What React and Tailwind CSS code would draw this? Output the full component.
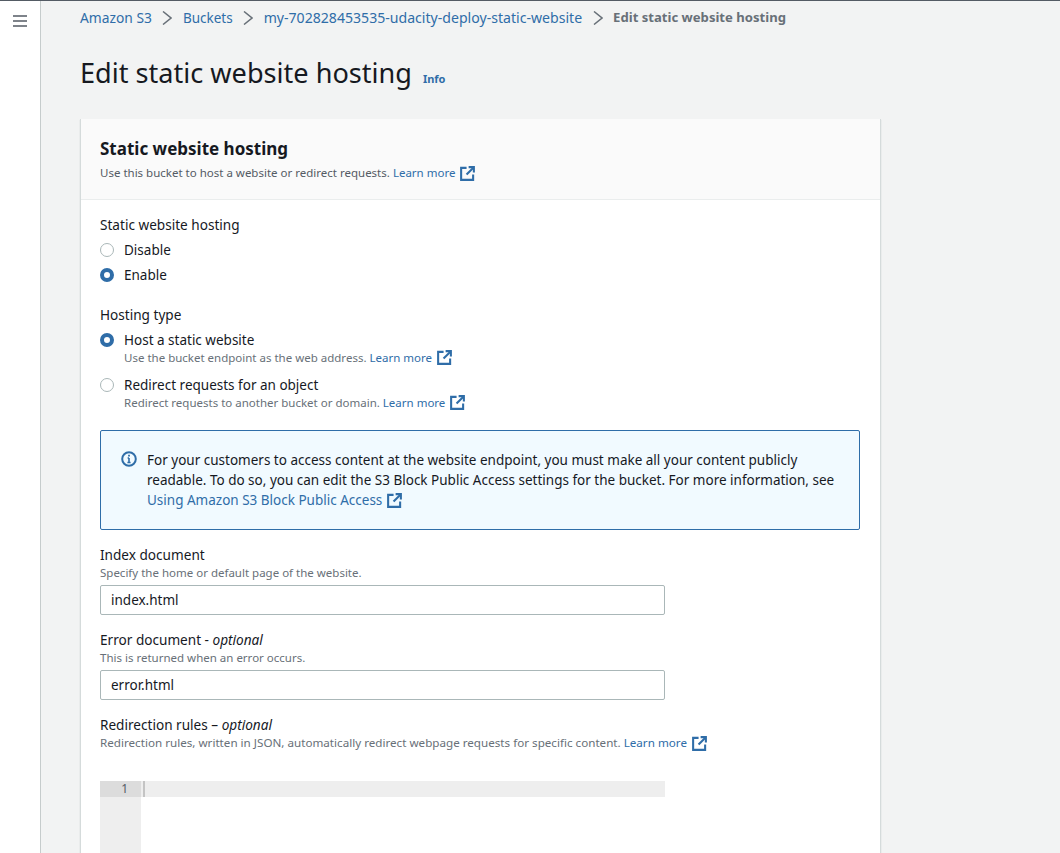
const FONT = "font-['Noto_Sans',sans-serif]";

function ExternalIcon({ className = "" }) {
  return (
    <svg viewBox="0 0 16 16" className={`inline-block w-[15px] h-[15px] shrink-0 ${className}`} fill="none" stroke="#2f6da8" strokeWidth="2.2">
      <path d="M7 2H1.2v12.8H14V9" />
      <path d="M9.2 1.2h5.6v5.6" />
      <path d="M14.5 1.5L7 9" />
    </svg>
  );
}

function LearnMore({ text = "Learn more" }) {
  return (
    <a className="text-[#2f6da8] inline-flex items-center gap-[5px] ml-[3px]">
      {text}
      <ExternalIcon />
    </a>
  );
}

function Radio({ checked }) {
  return checked ? (
    <span className="w-[14px] h-[14px] rounded-full bg-white border-[4px] border-[#2f6da8] shrink-0" />
  ) : (
    <span className="w-[14px] h-[14px] rounded-full bg-white border border-[#aab7b8] shrink-0" />
  );
}

function Option({ checked, label, children }) {
  return (
    <div>
      <div className="flex items-center gap-[10px] h-[20px] text-[13.5px] text-[#16191f]">
        <Radio checked={checked} />
        <span>{label}</span>
      </div>
      {children && <div className="ml-[24px] h-[15px] flex items-center text-[11.5px] text-[#687078]">{children}</div>}
    </div>
  );
}

function Sep() {
  return (
    <svg viewBox="0 0 10 14" className="w-[10px] h-[14px] shrink-0" fill="none" stroke="#687078" strokeWidth="1.5">
      <path d="M1 .5L9 7l-8 6.5" />
    </svg>
  );
}

export default function App() {
  return (
    <div className={`${FONT} h-[853px] overflow-hidden flex bg-[#f2f3f3] border-t border-[#545b64]`}>
      <aside className="w-[41px] shrink-0 bg-white border-r border-[#c6cccc] pt-[14px] flex justify-center">
        <svg viewBox="0 0 14 12" className="w-[14px] h-[12px]" stroke="#545b64" strokeWidth="1.6">
          <path d="M0 1h14M0 6h14M0 11h14" />
        </svg>
      </aside>

      <main className="flex-1 pl-[39px]">
        <nav className="flex items-center h-[34px] gap-[10.5px]">
          <a className="text-[#2f6da8] text-[13.8px]">Amazon S3</a>
          <Sep />
          <a className="text-[#2f6da8] text-[13.5px]">Buckets</a>
          <Sep />
          <a className="text-[#2f6da8] text-[14.1px]">my-702828453535-udacity-deploy-static-website</a>
          <Sep />
          <span className="font-bold text-[13.1px] text-[#687078]">Edit static website hosting</span>
        </nav>

        <div className="flex items-baseline mt-[17px] h-[42px]">
          <h1 className="text-[27.1px] leading-[42px] text-[#16191f]">Edit static website hosting</h1>
          <a className="ml-[11px] text-[11px] font-bold text-[#2f6da8]">Info</a>
        </div>

        <section className="mt-[25px] w-[801px] bg-white border-r border-l border-[#d5dbdb] shadow-[0_1px_1px_rgba(0,28,36,0.2)]">
          <header className="h-[81px] bg-[#fafafa] border-b border-[#eaeded] pl-[19px] pr-[20px] pt-[18px]">
            <h2 className="text-[17px] leading-[24px] font-bold text-[#16191f]">Static website hosting</h2>
            <p className="text-[11.5px] leading-[16px] mt-[4px] text-[#545b64] flex items-center">
              Use this bucket to host a website or redirect requests.
              <LearnMore />
            </p>
          </header>

          <div className="pl-[19px] pr-[20px] pt-[15px]">
            <div className="text-[13.6px] leading-[20px] text-[#16191f]">Static website hosting</div>
            <div className="mt-[5px] flex flex-col gap-[5px]">
              <Option label="Disable" />
              <Option checked label="Enable" />
            </div>

            <div className="mt-[20px] text-[13.6px] leading-[20px] text-[#16191f]">Hosting type</div>
            <div className="mt-[5px] flex flex-col gap-[10px]">
              <Option checked label="Host a static website">
                Use the bucket endpoint as the web address.
                <LearnMore />
              </Option>
              <Option label="Redirect requests for an object">
                Redirect requests to another bucket or domain.
                <LearnMore />
              </Option>
            </div>

            <div className="mt-[20px] h-[100px] border border-[#2f6da8] rounded-[2px] bg-[#f1faff] pl-[20px] pr-[20px] pt-[19px] flex gap-[10px]">
              <svg viewBox="0 0 16 16" className="w-[16px] h-[16px] mt-[1px] shrink-0" fill="none" stroke="#2f6da8" strokeWidth="2">
                <circle cx="8" cy="8" r="6.8" />
                <path d="M8 7v4.5M6.4 11.5h3.2M6.6 7H8" strokeWidth="1.6" />
                <path d="M8 3.8v1.8" strokeWidth="1.8" />
              </svg>
              <p className="text-[13.5px] leading-[20px] text-[#16191f]">
                For your customers to access content at the website endpoint, you must make all your content publicly readable. To do so, you can edit the S3 Block Public Access settings for the bucket. For more information, see{" "}
                <a className="text-[#2f6da8] inline-flex items-center gap-[5px]">
                  Using Amazon S3 Block Public Access
                  <ExternalIcon />
                </a>
              </p>
            </div>

            <div className="mt-[15px] text-[13.6px] leading-[20px] text-[#16191f]">Index document</div>
            <div className="text-[11.5px] leading-[16px] text-[#687078]">Specify the home or default page of the website.</div>
            <input readOnly value="index.html" className="mt-[4px] block w-[565px] h-[30px] border border-[#aab7b8] rounded-[2px] px-[10px] text-[13.5px] text-[#16191f] bg-white" />

            <div className="mt-[15px] text-[13.6px] leading-[20px] text-[#16191f]">
              Error document - <i>optional</i>
            </div>
            <div className="text-[11.5px] leading-[16px] text-[#687078]">This is returned when an error occurs.</div>
            <input readOnly value="error.html" className="mt-[4px] block w-[565px] h-[30px] border border-[#aab7b8] rounded-[2px] px-[10px] text-[13.5px] text-[#16191f] bg-white" />

            <div className="mt-[15px] text-[13.6px] leading-[20px] text-[#16191f]">
              Redirection rules – <i>optional</i>
            </div>
            <div className="text-[11.65px] leading-[16px] text-[#687078] flex items-center">
              Redirection rules, written in JSON, automatically redirect webpage requests for specific content.
              <LearnMore />
            </div>

            <div className="mt-[30px] w-[565px] h-[72px] flex relative">
              <div className="w-[41px] bg-[#eeeeee]" />
              <div className="absolute inset-x-0 top-0 h-[16px] bg-[#eeeeee] flex items-center">
                <span className="w-[41px] pr-[13px] text-right text-[12px] text-[#545b64] bg-[#dcdcdc] h-full leading-[16px]">1</span>
                <span className="ml-[2px] w-[2px] h-full bg-[#c4c4c4]" />
              </div>
            </div>
          </div>
        </section>
      </main>
    </div>
  );
}
